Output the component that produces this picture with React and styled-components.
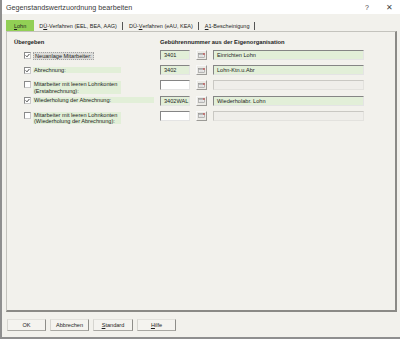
import React from "react";
import styled, { createGlobalStyle } from "styled-components";

const Global = createGlobalStyle`
  html, body { margin: 0; padding: 0; }
  body {
    background: #f2f1ec;
    font-family: "Liberation Sans", Arial, sans-serif;
    color: #1e1e1e;
  }
`;

const Window = styled.div`
  width: 400px;
  height: 339px;
  box-sizing: border-box;
  border-left: 2px solid #8f8f8f;
  border-bottom: 2px solid #8f8f8f;
  background: #f2f1ec;
  display: flex;
  flex-direction: column;
`;

const TitleBar = styled.div`
  height: 14px;
  background: #fff;
  display: flex;
  align-items: center;
  padding-left: 4px;
  font-size: 7.2px;
  color: #3a3a3a;
`;

const TitleControl = styled.span`
  width: 22px;
  text-align: center;
  font-size: ${(p) => p.size || 7}px;
  color: #444;
  &:first-of-type {
    margin-left: auto;
  }
`;

const TabStrip = styled.div`
  display: flex;
  align-items: center;
  height: 11px;
  margin: 6px 0 0 4px;
  font-size: 5.5px;
`;

const Tab = styled.div`
  height: ${(p) => (p.active ? "11px" : "8px")};
  display: flex;
  align-items: center;
  padding: 0 ${(p) => (p.active ? "8px" : "5px")};
  margin-right: ${(p) => (p.active ? "0" : "1px")};
  background: ${(p) => (p.active ? "#92cf55" : "transparent")};
  border-right: ${(p) => (p.active ? "none" : "1px solid #555")};
  white-space: nowrap;
`;

const Panel = styled.div`
  flex: 1;
  margin: 0 3px 0 4px;
  border: 1px solid #c4c3bd;
  border-right: 2px solid #8b8a86;
  border-bottom: 2px solid #8b8a86;
  padding: 6px 0 0 7px;
`;

const Headers = styled.div`
  display: flex;
  height: 8px;
  align-items: center;
  margin-bottom: 4px;
  font-size: 5.8px;
  font-weight: bold;
`;

const Header = styled.div`
  width: ${(p) => p.width || "auto"};
`;

const Rows = styled.div`
  display: grid;
  grid-template-columns: 140px 30px 11px 151px;
  grid-auto-rows: 10px;
  column-gap: 6px;
  row-gap: 5.2px;
  font-size: 5.6px;
`;

const Choice = styled.div`
  display: flex;
  align-items: flex-start;
  padding-left: 10px;
  position: relative;
  z-index: 1;
`;

const Box = styled.span`
  flex: none;
  width: 7px;
  height: 7px;
  margin-top: ${(p) => (p.tall ? "1px" : "1.5px")};
  box-sizing: border-box;
  background: #fff;
  border: 1px solid #8a8a8a;
  border-right-color: #c8c8c8;
  border-bottom-color: #c8c8c8;
  display: flex;
  align-items: center;
  justify-content: center;
`;

const Label = styled.span`
  margin-left: 2px;
  margin-top: ${(p) => (p.tall ? "1px" : "1.5px")};
  width: ${(p) => p.width || "auto"};
  padding: 0 1px;
  line-height: 6.3px;
  background: ${(p) => (p.focus ? "#dcdcd9" : "#e2efd8")};
  border: ${(p) => (p.focus ? "0.5px dotted #a0a0a0" : "none")};
  white-space: nowrap;
`;

const Field = styled.div`
  box-sizing: border-box;
  height: 10px;
  display: flex;
  align-items: center;
  padding-left: 3px;
  border: 1px solid;
  border-color: ${(p) =>
    p.disabled ? "#c9c8c3 #e3e2de #e3e2de #c9c8c3" : "#858585 #e4e4e4 #e4e4e4 #858585"};
  background: ${(p) => (p.disabled ? "#efeeea" : p.filled ? "#e2efd8" : "#fff")};
  white-space: nowrap;
  overflow: hidden;
`;

const Picker = styled.div`
  box-sizing: border-box;
  height: 10px;
  background: #ebeae5;
  border: 1px solid;
  border-color: #f8f8f8 #9c9b97 #9c9b97 #f8f8f8;
  display: flex;
  align-items: center;
  justify-content: center;
`;

const Footer = styled.div`
  height: 25px;
  display: flex;
  align-items: center;
  gap: 4px;
  padding-left: 5px;
`;

const Button = styled.div`
  box-sizing: border-box;
  width: ${(p) => p.width || 39}px;
  height: 12px;
  display: flex;
  align-items: center;
  justify-content: center;
  font-size: 5.6px;
  background: #f4f3ef;
  border: 1px solid;
  border-color: #e2e1dc #8e8d89 #a8a7a2 #d6d5d0;
`;

const Check = () => (
  <svg width="5" height="5" viewBox="0 0 5 5">
    <path d="M0.6 2.4 L2 3.8 L4.4 1" fill="none" stroke="#333" strokeWidth="0.9" />
  </svg>
);

const PickIcon = () => (
  <svg width="7" height="5" viewBox="0 0 7 5">
    <rect x="0.5" y="0.5" width="6" height="4" fill="#fff" stroke="#8a8a8a" strokeWidth="0.6" />
    <rect x="0.5" y="0.5" width="6" height="1.2" fill="#9a9a9a" />
    <rect x="5.2" y="0.3" width="1.5" height="1.4" fill="#d04545" />
    <line x1="1.3" y1="2.8" x2="5.7" y2="2.8" stroke="#b5b5b5" strokeWidth="0.5" />
    <line x1="1.3" y1="3.8" x2="5.7" y2="3.8" stroke="#b5b5b5" strokeWidth="0.5" />
  </svg>
);

const rows = [
  { label: "Neuanlage Mitarbeiter:", checked: true, focus: true, nr: "3401", name: "Einrichten Lohn" },
  { label: "Abrechnung:", checked: true, width: "86px", nr: "3402", name: "Lohn-Ktn.u.Abr" },
  { label: ["Mitarbeiter mit leeren Lohnkonten", "(Erstabrechnung):"], width: "86px" },
  { label: "Wiederholung der Abrechnung:", checked: true, width: "123px", nr: "3402WAL", name: "Wiederholabr. Lohn" },
  { label: ["Mitarbeiter mit leeren Lohnkonten", "(Wiederholung der Abrechnung):"], width: "86px" },
];

export default function App() {
  return (
    <>
      <Global />
      <Window>
        <TitleBar>
          Gegenstandswertzuordnung bearbeiten
          <TitleControl>?</TitleControl>
          <TitleControl size={8}>✕</TitleControl>
        </TitleBar>
        <TabStrip>
          <Tab active>
            <u>L</u>ohn
          </Tab>
          <Tab>
            D<u>Ü</u>-Verfahren (EEL, BEA, AAG)
          </Tab>
          <Tab>
            DÜ-<u>V</u>erfahren (eAU, KEA)
          </Tab>
          <Tab>
            <u>A</u>1-Bescheinigung
          </Tab>
        </TabStrip>
        <Panel>
          <Headers>
            <Header width="146px">Übergeben</Header>
            <Header>Gebührennummer aus der Eigenorganisation</Header>
          </Headers>
          <Rows>
            {rows.map((r, i) => {
              const tall = Array.isArray(r.label);
              return (
                <React.Fragment key={i}>
                  <Choice>
                    <Box tall={tall}>{r.checked && <Check />}</Box>
                    <Label focus={r.focus} width={r.width} tall={tall}>
                      {tall ? (
                        <>
                          {r.label[0]}
                          <br />
                          {r.label[1]}
                        </>
                      ) : (
                        r.label
                      )}
                    </Label>
                  </Choice>
                  <Field filled={!!r.nr}>{r.nr}</Field>
                  <Picker>
                    <PickIcon />
                  </Picker>
                  <Field filled={!!r.name} disabled={!r.name}>
                    {r.name}
                  </Field>
                </React.Fragment>
              );
            })}
          </Rows>
        </Panel>
        <Footer>
          <Button>OK</Button>
          <Button>Abbrechen</Button>
          <Button width={40}>
            <u>S</u>tandard
          </Button>
          <Button>
            <u>H</u>ilfe
          </Button>
        </Footer>
      </Window>
    </>
  );
}
